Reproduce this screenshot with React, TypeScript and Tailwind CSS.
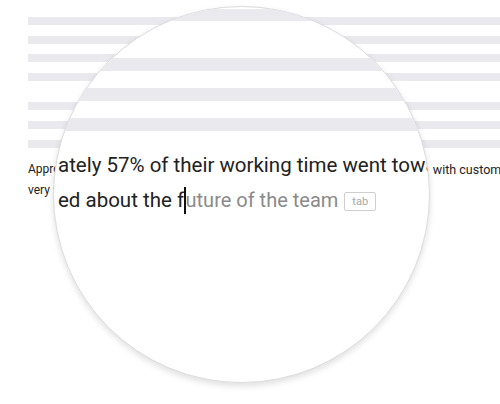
import React from 'react';

const font = { fontFamily: 'Roboto, "Noto Sans", sans-serif' };

function Bars({ className }: { className: string }) {
  return <div className={`h-[8px] bg-[#e9e9ee] ${className}`} />;
}

export default function App() {
  return (
    <div className="relative w-[500px] h-[404px] overflow-hidden bg-white" style={font}>
      {/* page underneath */}
      <div className="pl-[28px] pt-[17px]">
        <div className="flex flex-col gap-[10.7px]">
          <Bars className="" />
          <Bars className="" />
          <Bars className="" />
          <Bars className="" />
        </div>
        <div className="mt-[21px] flex flex-col gap-[11px]">
          <Bars className="" />
          <Bars className="" />
          <Bars className="" />
        </div>
        <div className="mt-[11px] text-[12px] leading-[21px] text-[#222] whitespace-nowrap">
          <div className="flex">
            <span>Approximately</span>
            <span className="ml-[328px] text-[12.5px]">with customers</span>
          </div>
          <div>very worried</div>
        </div>
      </div>

      {/* magnifier */}
      <div className="absolute left-[53px] top-[6px] w-[377px] h-[377px] rounded-full overflow-hidden bg-white border border-[#dcdcdc] shadow-[0_3px_6px_rgba(0,0,0,0.12)]">
        <div className="flex flex-col">
          <div className="mt-[2px] h-[12px] bg-[#e9e9ee]" />
          <div className="mt-[37px] h-[12.5px] bg-[#e9e9ee]" />
          <div className="mt-[17.5px] h-[12.5px] bg-[#e9e9ee]" />
          <div className="mt-[17.5px] h-[12.5px] bg-[#e9e9ee]" />
        </div>
        <div className="mt-[17px] pl-[4px] text-[20.5px] leading-[35px] text-[#222] whitespace-nowrap">
          <div>ately 57% of their working time went towards</div>
          <div className="flex items-center">
            <span>ed about the f</span>
            <span className="w-[1.5px] h-[27px] bg-[#111]" />
            <span className="text-[#8a8a8a] text-[20px]">uture of the team</span>
            <span className="ml-[6px] mt-[2px] h-[19px] px-[7px] border border-[#cfcfcf] rounded-[2px] text-[11px] leading-[17px] text-[#a8a8a8]">
              tab
            </span>
          </div>
        </div>
      </div>
    </div>
  );
}
